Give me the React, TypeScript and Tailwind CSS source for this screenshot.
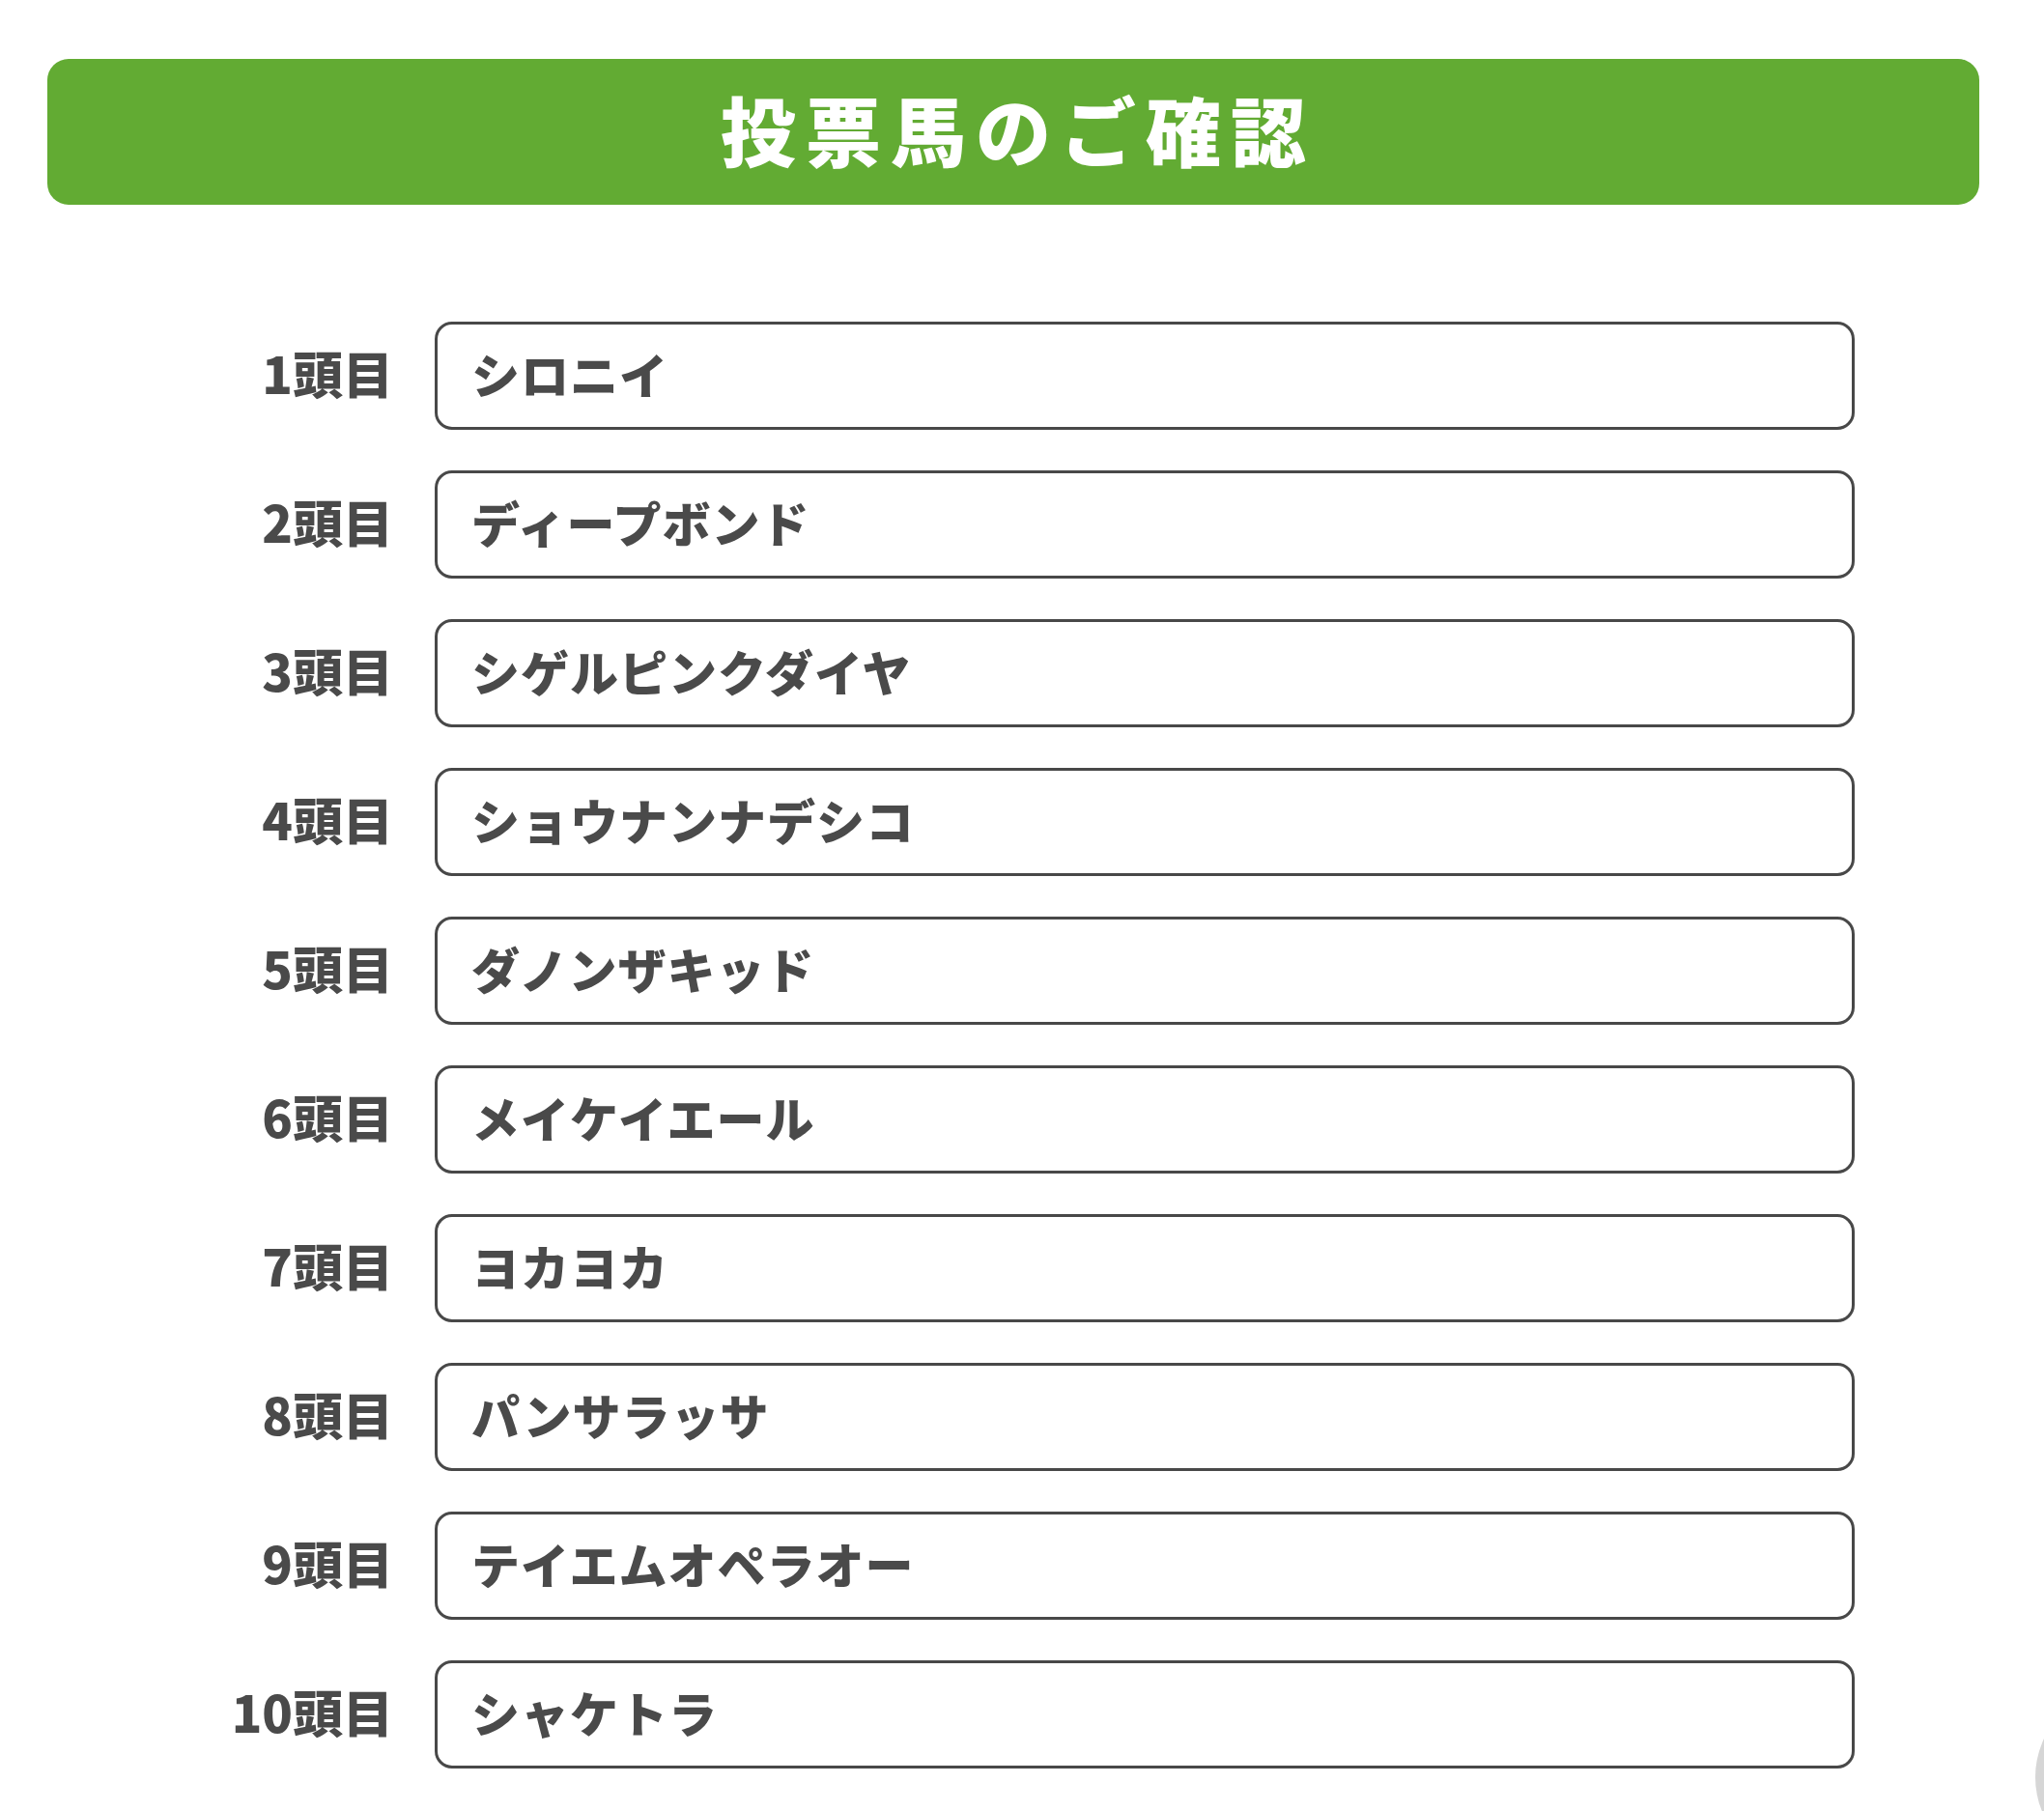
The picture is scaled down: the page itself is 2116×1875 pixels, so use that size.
const horses = [
  "シロニイ",
  "ディープボンド",
  "シゲルピンクダイヤ",
  "ショウナンナデシコ",
  "ダノンザキッド",
  "メイケイエール",
  "ヨカヨカ",
  "パンサラッサ",
  "テイエムオペラオー",
  "シャケトラ",
];

export default function App() {
  return (
    <div
      className="relative h-[1875px] w-full overflow-hidden bg-white text-[#4a4a4a]"
      style={{ fontFamily: '"Noto Sans CJK JP", "Noto Sans", sans-serif' }}
    >
      {/* Title bar */}
      <div className="pt-[61px] pl-[49px]">
        <div className="flex h-[151px] w-[2000px] items-center justify-center rounded-[22px] bg-[#62ab33] pb-[8px]">
          <h1 className="pl-[10px] text-[78px] font-black leading-none tracking-[10px] text-white">
            投票馬のご確認
          </h1>
        </div>
      </div>

      {/* Horse list */}
      <div className="mt-[121px] flex flex-col gap-[42px]">
        {horses.map((name, i) => (
          <div key={name} className="flex items-center">
            <div className="w-[407px] pb-[6px] text-right text-[52px] font-black leading-none">
              {i + 1}頭目
            </div>
            <div className="ml-[43px] flex h-[112px] w-[1470px] items-center rounded-[18px] border-[3px] border-[#484848] pb-[6px] pl-[35px]">
              <span className="text-[50px] font-black leading-none tracking-[1px]">{name}</span>
            </div>
          </div>
        ))}
      </div>

      {/* Scroll button peeking in */}
      <div className="absolute left-[2107px] top-[1747px] h-[186px] w-[186px] rounded-full bg-[#d6d6d6]" />
    </div>
  );
}
